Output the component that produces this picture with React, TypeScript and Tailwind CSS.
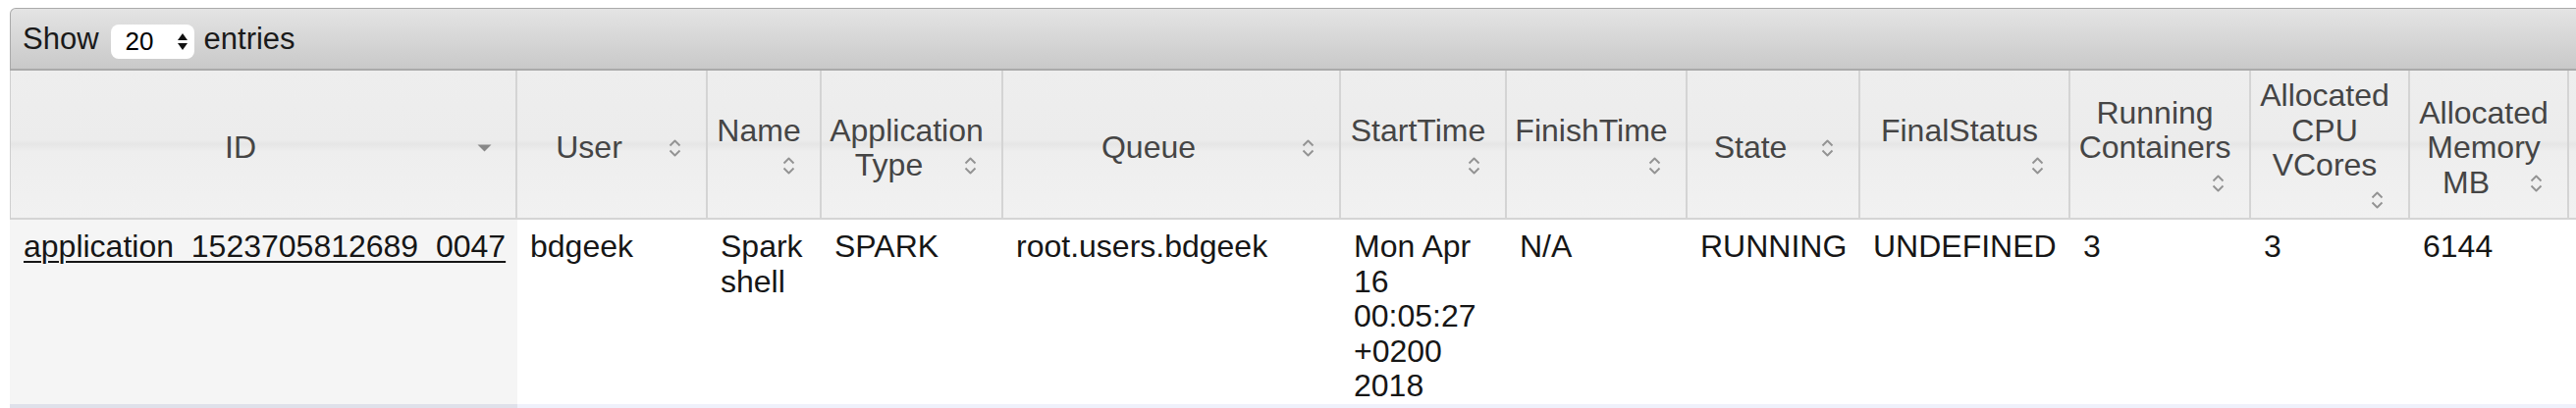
import React from "react";

type Col = { label: string; w: string; sorted?: boolean; blank?: boolean };

const cols: Col[] = [
  { label: "ID", w: "w-[517px]", sorted: true },
  { label: "User", w: "w-[194px]" },
  { label: "Name", w: "w-[116px]" },
  { label: "Application Type", w: "w-[185px]" },
  { label: "Queue", w: "w-[344px]" },
  { label: "StartTime", w: "w-[169px]" },
  { label: "FinishTime", w: "w-[184px]" },
  { label: "State", w: "w-[176px]" },
  { label: "FinalStatus", w: "w-[214px]" },
  { label: "Running Containers", w: "w-[184px]" },
  { label: "Allocated CPU VCores", w: "w-[162px]" },
  { label: "Allocated Memory MB", w: "w-[162px]" },
  { label: "", w: "w-[180px]", blank: true },
];

function SortBoth() {
  return (
    <svg width="13" height="22" viewBox="0 0 13 22" fill="none">
      <polyline points="1.5,8.5 6.5,3.5 11.5,8.5" stroke="#939393" strokeWidth="1.9" strokeLinejoin="round" />
      <polyline points="1.5,13.5 6.5,18.5 11.5,13.5" stroke="#939393" strokeWidth="1.9" strokeLinejoin="round" />
    </svg>
  );
}

function SortDesc() {
  return (
    <svg width="15" height="8" viewBox="0 0 15 8">
      <path d="M0.5 0.5 L14.5 0.5 L7.5 7.5 Z" fill="#888888" />
    </svg>
  );
}

function SelectArrows() {
  return (
    <svg width="12" height="19" viewBox="0 0 12 19">
      <path d="M1 8 L6 1 L11 8 Z" fill="#111" />
      <path d="M1 11 L6 18 L11 11 Z" fill="#111" />
    </svg>
  );
}

const cells: string[] = [
  "bdgeek",
  "Spark shell",
  "SPARK",
  "root.users.bdgeek",
  "Mon Apr 16 00:05:27 +0200 2018",
  "N/A",
  "RUNNING",
  "UNDEFINED",
  "3",
  "3",
  "6144",
  "",
];

export default function App() {
  return (
    <div className="w-[2624px] h-[416px] overflow-hidden bg-white font-['Liberation_Sans',Arial,Helvetica,sans-serif] text-[32px] leading-[35.5px]">
      <div className="ml-[10px] mt-[8px] w-[2787px]">
        <div className="h-[64px] border-t border-l border-r border-b-2 border-[#aaaaaa] rounded-t-[6px] bg-[linear-gradient(to_bottom,#e4e4e4,#c9c9c9)] flex items-center pl-[12px] text-[31px] text-[#1a1a1a]">
          <span>Show</span>
          <div className="ml-[12px] mt-[6px] w-[85px] h-[35px] rounded-[8px] bg-white flex items-center pl-[15px] pr-[6px] text-[26px] text-black">
            <span>20</span>
            <span className="ml-auto flex items-center">
              <SelectArrows />
            </span>
          </div>
          <span className="ml-[10px]">entries</span>
        </div>
        <table className="table-fixed border-separate border-spacing-0 w-[2787px]">
          <thead>
            <tr>
              {cols.map((c, i) => (
                <th
                  key={i}
                  className={
                    c.w +
                    " h-[152px] border-r-2 border-b-2 border-[#d4d4d4] pl-[8px] pr-[18px] pt-[8px] pb-0 align-middle text-center font-normal text-[#454545] bg-[linear-gradient(to_bottom,#eeeeee_0%,#ececec_47%,#e6e6e6_50%,#eeeeee_55%,#f1f1f1_100%)]" +
                    (i === 0 ? " border-l border-l-[#cfcfcf]" : "")
                  }
                >
                  {c.blank ? null : (
                    <div className="flow-root">
                      {c.label}
                      <span className="float-right ml-[14px] mr-[6px] w-[16px] h-[35.5px] flex items-center justify-center">
                        {c.sorted ? <SortDesc /> : <SortBoth />}
                      </span>
                    </div>
                  )}
                </th>
              ))}
            </tr>
          </thead>
          <tbody className="text-[#161616]">
            <tr>
              <td className="align-top pl-[14px] pr-[6px] pt-[10px] pb-0 bg-[#f5f5f5]">
                <a className="underline decoration-[1.5px] underline-offset-[4px] text-[#161616]">application_1523705812689_0047</a>
              </td>
              {cells.map((t, i) => (
                <td key={i} className="align-top pl-[13px] pr-[6px] pt-[10px] pb-0 bg-white">
                  {t}
                </td>
              ))}
            </tr>
            <tr>
              <td className="h-[30px] bg-[#dfe1ea]"></td>
              {cells.map((_, i) => (
                <td key={i} className="h-[30px] bg-[#eff1fb]"></td>
              ))}
            </tr>
          </tbody>
        </table>
      </div>
    </div>
  );
}
